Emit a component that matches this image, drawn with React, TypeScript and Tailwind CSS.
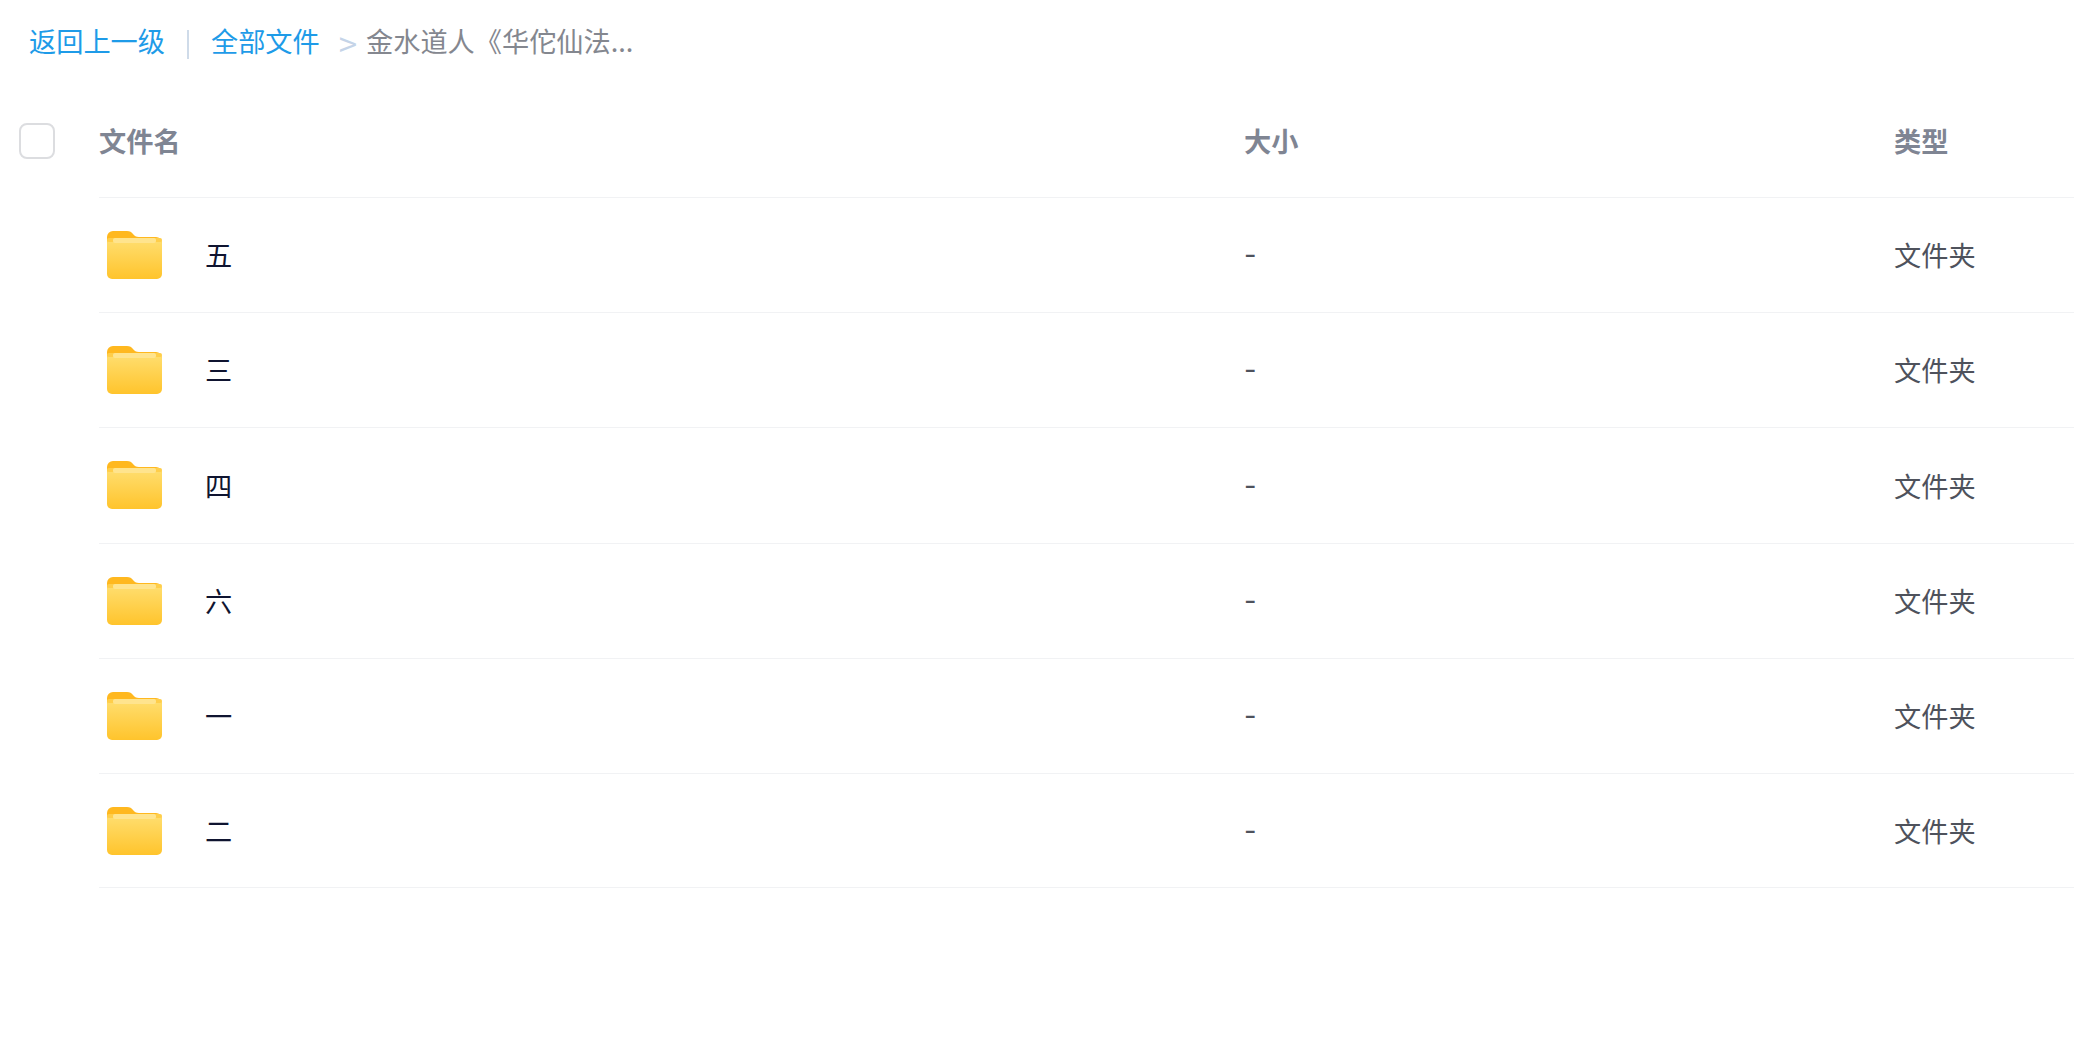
const rows = ["五", "三", "四", "六", "一", "二"];

function FolderIcon() {
  return (
    <svg width="55" height="48" viewBox="0 0 55 48" className="shrink-0">
      <defs>
        <linearGradient id="folderFront" x1="0" y1="0" x2="0" y2="1">
          <stop offset="0" stopColor="#ffdf72" />
          <stop offset="1" stopColor="#ffc42c" />
        </linearGradient>
      </defs>
      <path
        d="M0 6a6 6 0 0 1 6-6h14c3 0 4.500 1 6 3s3 3 6 3h17a6 6 0 0 1 6 6v10H0z"
        fill="#ffb81f"
      />
      <rect x="0" y="7" width="55" height="41" rx="5" fill="url(#folderFront)" />
      <rect x="0" y="7" width="55" height="4" rx="2" fill="#ffce4a" />
      <rect x="6" y="7" width="43" height="5" rx="2" fill="#ffe48e" />
    </svg>
  );
}

export default function App() {
  return (
    <div className="min-h-[1053px] overflow-hidden bg-white font-['Noto_Sans_CJK_SC',sans-serif] text-[27.2px]">
      {/* 面包屑 */}
      <div className="flex h-[84px] items-center pl-[29px] leading-none">
        <span className="mb-[2px] text-[#1e9be8]">返回上一级</span>
        <span className="ml-[22px] mt-[4px] h-[29px] w-[2px] bg-[#cfdbe9]" />
        <span className="ml-[22px] mb-[2px] text-[#1e9be8]">全部文件</span>
        <span className="ml-[19px] mt-[3px] text-[33px] text-[#c5d4e8]">&gt;</span>
        <span className="ml-[9px] mb-[2px] text-[#84878f]">金水道人《华佗仙法...</span>
      </div>

      {/* 表头 */}
      <div className="flex h-[113px] items-center pl-[19px]">
        <div className="h-[36px] w-[36px] shrink-0 rounded-[8px] border-2 border-[#dcdde0] bg-white" />
        <div className="ml-[44px] w-[1145px] shrink-0 font-bold text-[#7f8593]">文件名</div>
        <div className="w-[650px] shrink-0 font-bold text-[#7f8593]">大小</div>
        <div className="font-bold text-[#7f8593]">类型</div>
      </div>

      {/* 文件列表 */}
      <div className="ml-[99px]">
        {rows.map((name) => (
          <div key={name} className="flex h-[115.2px] items-center border-t border-[#f1f2f4] last:border-b">
            <div className="flex w-[1145px] shrink-0 items-center pl-[8px]">
              <FolderIcon />
              <span className="ml-[43px] mb-[1px] text-[#0f1430]">{name}</span>
            </div>
            <div className="mt-[1px] w-[650px] shrink-0 font-['Inter',sans-serif] text-[#4e525c]">-</div>
            <div className="mb-[1px] text-[#4e525c]">文件夹</div>
          </div>
        ))}
      </div>
    </div>
  );
}
